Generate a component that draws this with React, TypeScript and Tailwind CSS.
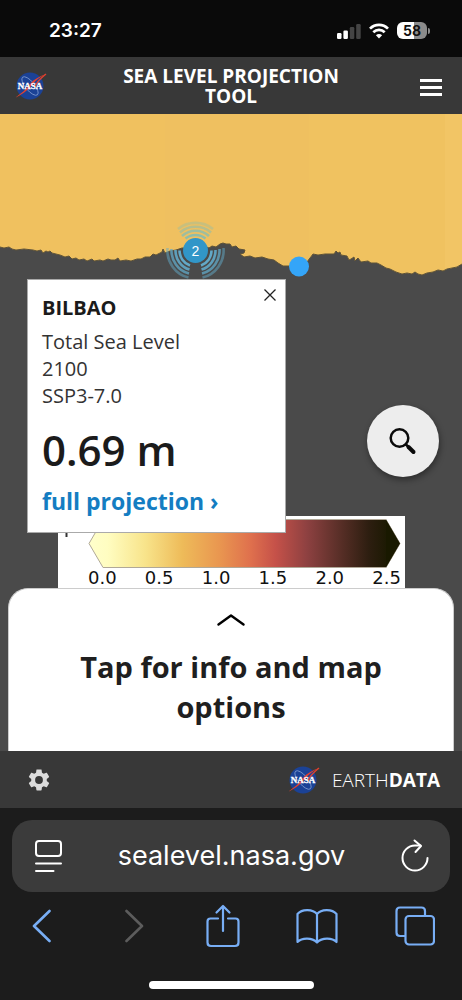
import React, { useState } from 'react';

const legendTicks = ['0.0', '0.5', '1.0', '1.5', '2.0', '2.5'];

const coastline =
  'M0 133L4 134L9 133L12 135L16 136L24 135L33 136L37 137L41 136L43 139L46 137L48 138L50 137L52 139L60 141L65 143L69 142L72 145L76 144L79 146L84 145L87 147L92 145L94 147L100 146L103 147L108 145L111 146L115 146L118 144L120 147L126 146L131 147L137 145L141 145L145 143L150 143L153 140L156 141L162 138L163 135L165 139L170 137L176 136L182 134L188 134L195 133L204 132L209 134L212 132L216 133L220 130L223 129L226 130L230 130L232 133L236 132L239 135L245 136L244 139L240 140L244 143L250 142L255 144L262 143L268 145L274 146L278 149L283 152L291 152L298 151L307 148L310 144L313 140L318 141L325 140L334 140L336 137L338 139L340 138L341 141L347 142L349 146L351 145L354 143L355 147L358 144L361 148L368 147L371 149L377 149L381 151L386 154L390 155L396 158L402 160L407 159L412 160L415 158L418 160L422 161L427 159L433 158L438 156L443 157L447 155L452 154L457 153L462 150';

function NasaLogo() {
  return (
    <svg viewBox="0 0 34 30" className="h-[30px] w-[34px] shrink-0" aria-hidden="true">
      <circle cx="17" cy="15" r="13.5" fill="#1b4296" />
      <ellipse cx="17" cy="15" rx="11.5" ry="4.5" fill="none" stroke="#7f9bd0" strokeWidth="0.8" transform="rotate(50 17 15)" />
      <path d="M33 3C27 6 23 9 19 14C14 20 8 24 2 27C8 22 13 19 17 13C21 8 27 5 33 3Z" fill="#e2412f" />
      <path d="M33 3C28 7 24 10 22 16" fill="none" stroke="#e2412f" strokeWidth="1.4" />
      <text x="17" y="18" textAnchor="middle" fontSize="9" fontWeight="700" fontFamily="'Liberation Serif', serif" fill="#fff" stroke="#fff" strokeWidth="0.3">
        NASA
      </text>
    </svg>
  );
}

function StatusBar() {
  return (
    <div className="flex h-[57px] items-center justify-between bg-[#0a0a0a] pt-1 pr-8 pl-[49px] text-white">
      <span className="font-['Inter',sans-serif] text-[19px] leading-6 font-semibold">23:27</span>
      <div className="flex items-center gap-2">
        <svg viewBox="0 0 24 16" className="h-4 w-6" aria-hidden="true">
          <rect x="0" y="10" width="4.5" height="6" rx="1.2" fill="#fff" />
          <rect x="6.4" y="7.5" width="4.5" height="8.5" rx="1.2" fill="#fff" />
          <rect x="12.8" y="4" width="4.5" height="12" rx="1.2" fill="#444" />
          <rect x="19.2" y="1" width="4.5" height="15" rx="1.2" fill="#444" />
        </svg>
        <svg viewBox="0 0 20 16" className="h-4 w-5" fill="none" stroke="#fff" strokeWidth="2.7" aria-hidden="true">
          <path d="M1 5.6C6 .6 14 .6 19 5.6" />
          <path d="M4.3 9.2C7.5 6.1 12.5 6.1 15.7 9.2" />
          <path d="M10 15.6L6.9 12.3C8.6 10.6 11.4 10.6 13.1 12.3Z" fill="#fff" stroke="none" />
        </svg>
        <div className="flex items-center gap-px">
          <span className="w-[30px] rounded-md bg-[linear-gradient(90deg,#fff_58%,#8b8b8b_58%)] text-center font-['Inter',sans-serif] text-sm leading-[17px] font-bold text-[#111]">
            58
          </span>
          <span className="h-[6px] w-[2px] rounded-r bg-[#8b8b8b]" />
        </div>
      </div>
    </div>
  );
}

function SiteHeader() {
  return (
    <header className="flex h-[57px] items-center justify-between bg-[#383838] pr-5 pl-[13px] text-white">
      <a href="#home" aria-label="NASA home">
        <NasaLogo />
      </a>
      <h1 className="w-[240px] text-center text-[19px] leading-5 font-bold">SEA LEVEL PROJECTION TOOL</h1>
      <button type="button" aria-label="Menu" className="flex w-[27px] flex-col items-end gap-1 pt-1">
        <span className="h-[3px] w-[22px] bg-white" />
        <span className="h-[3px] w-[22px] bg-white" />
        <span className="h-[3px] w-[22px] bg-white" />
      </button>
    </header>
  );
}

function MapCanvas() {
  return (
    <svg viewBox="0 0 462 637" preserveAspectRatio="xMidYMin slice" className="absolute inset-0 h-full w-full" role="img" aria-label="Sea level map">
      <defs>
        <clipPath id="sea">
          <path d={`${coastline}V0H0Z`} />
        </clipPath>
      </defs>
      <rect width="462" height="637" fill="#4a4a4a" />
      <g clipPath="url(#sea)">
        <rect width="462" height="170" fill="#efc060" />
        <rect width="165" height="170" fill="#f0c15f" />
        <rect x="309" width="153" height="170" fill="#f0c260" />
        <rect x="445" width="17" height="170" fill="#f2c565" />
      </g>
      <path d={coastline} fill="none" stroke="#5d5238" strokeWidth="1" />

      {/* cluster marker */}
      <g fill="none" strokeWidth="2.6">
        <g stroke="#62a9c8">
          <path d="M179.5 136.5A16 16 0 0 0 190 151.5M211.5 136.5A16 16 0 0 1 201 151.5" />
          <path d="M175.5 136A20 20 0 0 0 189.5 155.6M215.5 136A20 20 0 0 1 201.5 155.6" opacity=".9" />
          <path d="M171.5 135A24 24 0 0 0 189 159.6M219.5 135A24 24 0 0 1 202 159.6" opacity=".75" />
          <path d="M167.5 134A28 28 0 0 0 188.5 163.6M223.5 134A28 28 0 0 1 202.5 163.6" opacity=".5" />
        </g>
        <g stroke="#8fbdaa">
          <path d="M185.5 124.5A16 16 0 0 1 205.5 124.5" />
          <path d="M182 122A20 20 0 0 1 209 122" opacity=".85" />
          <path d="M180 118.5A24 24 0 0 1 211 118.5" opacity=".6" />
          <path d="M178 115A28 28 0 0 1 213 115" opacity=".4" />
        </g>
      </g>
      <circle cx="195.5" cy="136.5" r="12.5" fill="#3196c8" />
      <text x="195.5" y="141.5" textAnchor="middle" fontSize="14" fontFamily="'Liberation Sans', sans-serif" fill="#fff">
        2
      </text>
      <circle cx="299" cy="152.5" r="10" fill="#34a5f8" />
    </svg>
  );
}

function StationPopup({ onClose }: { onClose: () => void }) {
  return (
    <section className="absolute top-[165px] left-[27px] w-[259px] border border-[#aaa] bg-white px-[14px] pt-4 pb-[15px] text-[#1b1b1b]">
      <button type="button" aria-label="Close" onClick={onClose} className="absolute top-2 right-2">
        <svg viewBox="0 0 14 14" className="h-[14px] w-[14px]" fill="none" stroke="#222" strokeWidth="1.3" aria-hidden="true">
          <path d="M1.5 1.5L12.5 12.5M12.5 1.5L1.5 12.5" />
        </svg>
      </button>
      <h2 className="mb-2 text-xl leading-6 font-bold">BILBAO</h2>
      <div className="text-xl leading-[27px] text-[#333]">
        <p>Total Sea Level</p>
        <p>2100</p>
        <p>SSP3-7.0</p>
      </div>
      <p className="mt-[14px] text-[42px] leading-[54px] font-semibold">0.69 m</p>
      <a href="#projection" className="mt-2 block text-[23px] leading-8 font-bold text-[#147dc2]">
        full projection ›
      </a>
    </section>
  );
}

function Legend() {
  return (
    <div className="relative mt-auto mr-[57px] ml-[58px] bg-white pt-[3px] pr-1 pl-[30px]">
      <svg viewBox="0 0 313 49" preserveAspectRatio="none" className="h-[49px] w-full overflow-visible" aria-hidden="true">
        <defs>
          <linearGradient id="scale">
            <stop offset="0" stopColor="#ffffcb" />
            <stop offset="0.06" stopColor="#fffdc1" />
            <stop offset="0.18" stopColor="#f8e48b" />
            <stop offset="0.3" stopColor="#eebb59" />
            <stop offset="0.42" stopColor="#e99650" />
            <stop offset="0.52" stopColor="#df704d" />
            <stop offset="0.6" stopColor="#c55149" />
            <stop offset="0.7" stopColor="#8e4141" />
            <stop offset="0.8" stopColor="#5c3029" />
            <stop offset="0.9" stopColor="#2d1e10" />
            <stop offset="0.97" stopColor="#191900" />
          </linearGradient>
        </defs>
        <path d="M1 24.5L15 .5H298L312 24.5L298 48.5H15Z" fill="url(#scale)" stroke="#b0a898" strokeWidth="1" />
        <path d="M298 .5L312 24.5L298 48.5Z" fill="#191900" />
        <path d="M-21.5 6V18" stroke="#333" strokeWidth="2" />
      </svg>
      <div className="flex justify-between font-['DejaVu_Sans',sans-serif] text-lg leading-5 text-[#111]">
        {legendTicks.map((tick) => (
          <span key={tick}>{tick}</span>
        ))}
      </div>
    </div>
  );
}

function SiteFooter() {
  return (
    <footer className="flex h-[57px] items-center justify-between bg-[#383838] pr-[22px] pl-[26px] text-white">
      <button type="button" aria-label="Settings">
        <svg viewBox="0 0 24 24" className="h-[26px] w-[26px]" fill="#dcdcdc" aria-hidden="true">
          <path d="M19.14 12.94c.04-.3.06-.61.06-.94 0-.32-.02-.64-.07-.94l2.03-1.58c.18-.14.23-.41.12-.61l-1.92-3.32c-.12-.22-.37-.29-.59-.22l-2.39.96c-.5-.38-1.03-.7-1.62-.94l-.36-2.54c-.04-.24-.24-.41-.48-.41h-3.84c-.24 0-.43.17-.47.41l-.36 2.54c-.59.24-1.13.57-1.62.94l-2.39-.96c-.22-.08-.47 0-.59.22L2.74 8.87c-.12.21-.08.47.12.61l2.03 1.58c-.05.3-.09.63-.09.94s.02.64.07.94l-2.03 1.58c-.18.14-.23.41-.12.61l1.92 3.32c.12.22.37.29.59.22l2.39-.96c.5.38 1.03.7 1.62.94l.36 2.54c.05.24.24.41.48.41h3.84c.24 0 .44-.17.47-.41l.36-2.54c.59-.24 1.13-.56 1.62-.94l2.39.96c.22.08.47 0 .59-.22l1.92-3.32c.12-.22.07-.47-.12-.61l-2.01-1.58zM12 15.6a3.6 3.6 0 1 1 0-7.2 3.6 3.6 0 0 1 0 7.2z" />
        </svg>
      </button>
      <a href="#earthdata" className="flex items-center gap-3 text-[19px] leading-6 font-light">
        <NasaLogo />
        <span>
          EARTH<b className="font-bold">DATA</b>
        </span>
      </a>
    </footer>
  );
}

function BrowserChrome() {
  return (
    <div className="bg-[#1c1c1c] pt-3 pb-[11px]">
      <div className="mx-3 flex h-[72px] items-center justify-between rounded-[20px] bg-[#3b3b3b] pr-5 pl-[22px] text-white">
        <button type="button" aria-label="Page settings">
          <svg viewBox="0 0 29 34" className="h-[34px] w-[29px]" fill="none" stroke="#fff" strokeWidth="2" strokeLinecap="round" aria-hidden="true">
            <rect x="2" y="2" width="25" height="15" rx="3" />
            <path d="M2 24.5H27M2 32H19.500" />
          </svg>
        </button>
        <input
          type="text"
          aria-label="Address"
          defaultValue="sealevel.nasa.gov"
          className="w-[260px] bg-transparent text-center font-['Inter',sans-serif] text-[27px] leading-9 outline-none"
        />
        <button type="button" aria-label="Reload">
          <svg viewBox="0 0 30 34" className="h-[34px] w-[30px]" fill="none" stroke="#fff" strokeWidth="2" strokeLinecap="round" strokeLinejoin="round" aria-hidden="true">
            <path d="M27.500 19A12.500 12.500 0 1 1 15 6.500H20.500" />
            <path d="M14.500 1.500L21 7L15.500 13" />
          </svg>
        </button>
      </div>
      <nav className="flex h-[68px] items-center justify-between pr-[27px] pl-8 text-[#78aef5]" aria-label="Browser">
        <button type="button" aria-label="Back" className="w-8">
          <svg viewBox="0 0 19 34" className="h-[34px] w-[19px]" fill="none" stroke="currentColor" strokeWidth="2.6" strokeLinecap="round" strokeLinejoin="round" aria-hidden="true">
            <path d="M17.500 2L2 17L17.500 32" />
          </svg>
        </button>
        <button type="button" aria-label="Forward" disabled className="flex w-7 justify-center text-[#5c5c5c]">
          <svg viewBox="0 0 19 34" className="h-[34px] w-[19px]" fill="none" stroke="currentColor" strokeWidth="2.6" strokeLinecap="round" strokeLinejoin="round" aria-hidden="true">
            <path d="M1.500 2L17 17L1.500 32" />
          </svg>
        </button>
        <button type="button" aria-label="Share">
          <svg viewBox="0 0 34 44" className="h-[44px] w-[34px]" fill="none" stroke="currentColor" strokeWidth="2.2" strokeLinecap="round" strokeLinejoin="round" aria-hidden="true">
            <path d="M12 14.500H4.500Q1.500 14.500 1.500 17.500V38.500Q1.500 42 5 42H29Q32.500 42 32.500 38.500V17.500Q32.500 14.500 29.500 14.500H22" />
            <path d="M17 27V2M10.500 8.500L17 2L23.500 8.500" />
          </svg>
        </button>
        <button type="button" aria-label="Bookmarks">
          <svg viewBox="0 0 42 36" className="h-9 w-[42px]" fill="none" stroke="currentColor" strokeWidth="2.2" strokeLinejoin="round" aria-hidden="true">
            <path d="M21 6C17 1 6 .5 1.500 6V34C6 29.500 16 29.500 21 34.500C26 29.500 36 29.500 40.500 34V6C36 .5 25 1 21 6ZM21 6V34" />
          </svg>
        </button>
        <button type="button" aria-label="Tabs">
          <svg viewBox="0 0 40 40" className="h-10 w-10" fill="none" stroke="currentColor" strokeWidth="2.2" strokeLinejoin="round" aria-hidden="true">
            <path d="M10 30H5Q1.500 30 1.500 26.500V5Q1.500 1.500 5 1.500H26.500Q30 1.500 30 5V10" />
            <rect x="10.500" y="10" width="28.500" height="28.500" rx="3.500" />
          </svg>
        </button>
      </nav>
      <div className="mx-auto mt-[21px] h-2 w-[165px] rounded-full bg-white" />
    </div>
  );
}

function App() {
  const [popupOpen, setPopupOpen] = useState(true);

  return (
    <div className="flex min-h-screen flex-col bg-[#4a4a4a] font-['Open_Sans',sans-serif]">
      <StatusBar />
      <SiteHeader />
      <main className="relative flex flex-1 flex-col">
        <MapCanvas />
        <Legend />
        {popupOpen && <StationPopup onClose={() => setPopupOpen(false)} />}
        <button
          type="button"
          aria-label="Search"
          className="absolute top-[291px] right-[23px] flex h-[72px] w-[72px] items-center justify-center rounded-full bg-[#ededed] shadow-[1px_3px_6px_rgba(0,0,0,0.4)]"
        >
          <svg viewBox="0 0 28 28" className="h-7 w-7" fill="none" stroke="#0a0a0a" strokeLinecap="round" aria-hidden="true">
            <circle cx="10.500" cy="11" r="8.800" strokeWidth="2.500" />
            <path d="M17 17.500L19 19.500" strokeWidth="2.500" />
            <path d="M19.500 20L24.500 25" strokeWidth="4" />
          </svg>
        </button>
        <button type="button" className="relative mx-2 flex flex-col items-center rounded-t-[20px] border border-b-0 border-[#ccc] bg-white px-14 pt-6 pb-6 text-[#1f1f1f]">
          <svg viewBox="0 0 28 14" className="mb-5 h-[14px] w-7" fill="none" stroke="#000" strokeWidth="2.400" strokeLinecap="round" strokeLinejoin="round" aria-hidden="true">
            <path d="M1.500 11.500L14 2.500L26.500 11.500" />
          </svg>
          <span className="text-[29px] leading-10 font-bold">Tap for info and map options</span>
        </button>
      </main>
      <SiteFooter />
      <BrowserChrome />
    </div>
  );
}

export default App;
